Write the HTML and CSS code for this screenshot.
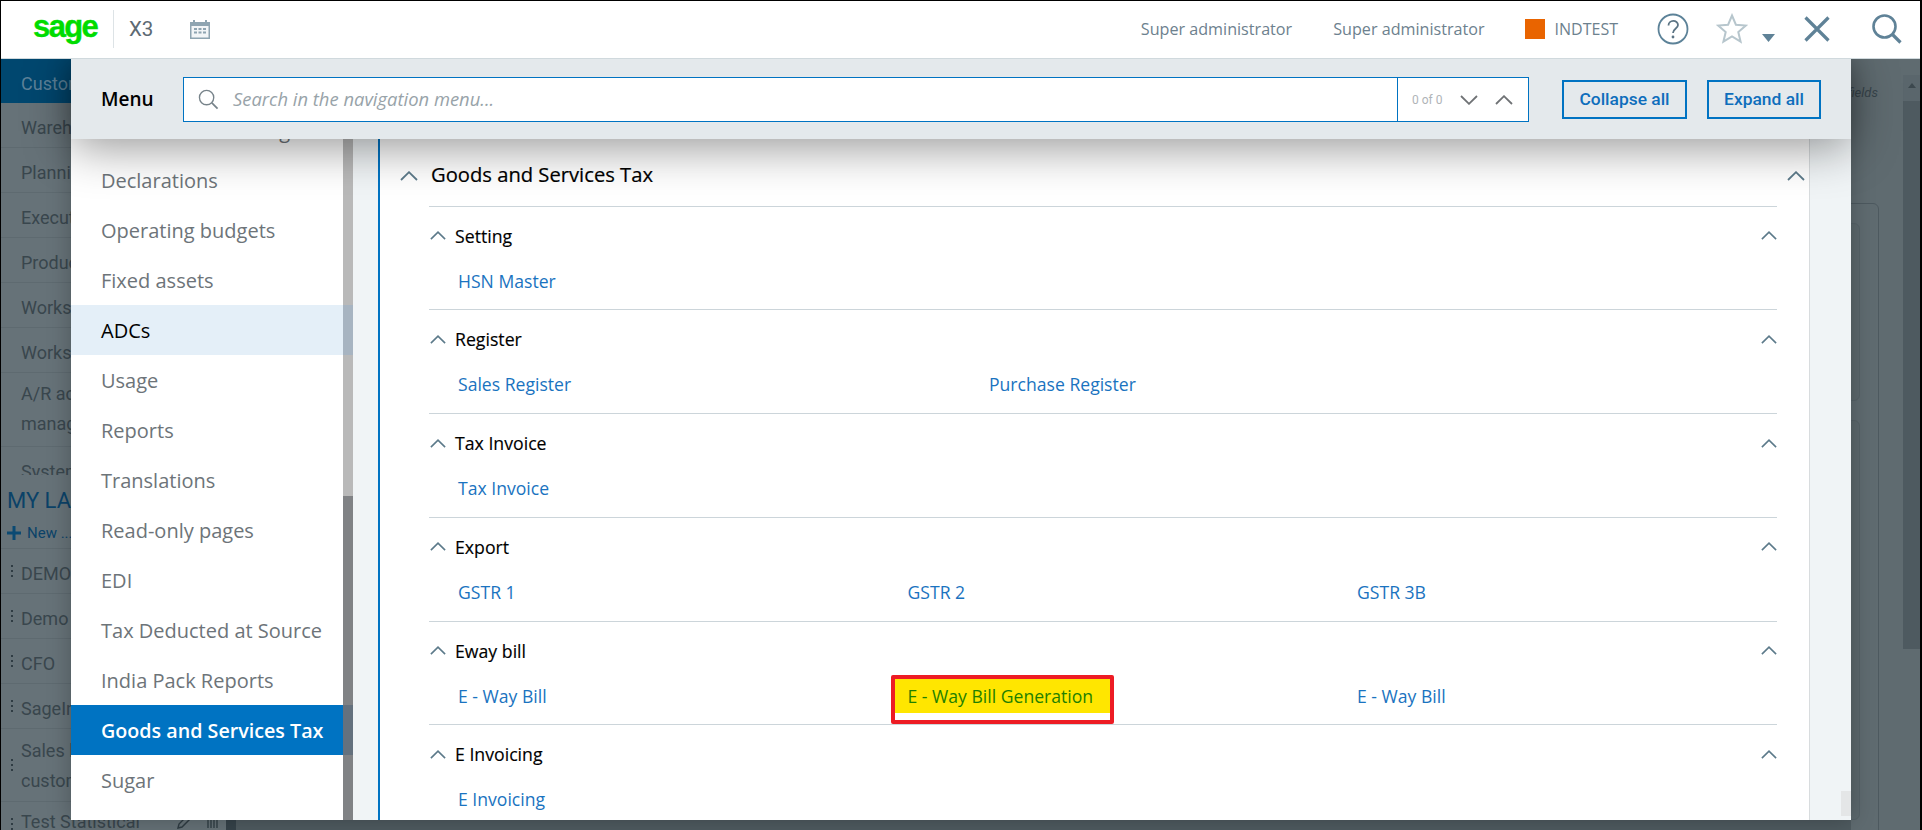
FILE: index.html
```html
<!DOCTYPE html>
<html lang="en">
<head>
<meta charset="utf-8">
<title>Sage X3 menu</title>
<link rel="stylesheet" href="styles.css">
</head>
<body>
<svg class="sprite" aria-hidden="true">
  <symbol id="chev" viewBox="0 0 18 10"><path d="M1 9 9 1.2 17 9" fill="none" stroke="currentColor" stroke-width="1.8"/></symbol>
  <symbol id="dots" viewBox="0 0 4 14"><path d="M1 1h2v2H1zM1 6h2v2H1zM1 11h2v2H1z" fill="currentColor"/></symbol>
</svg>
<div class="app">
  <header class="topbar">
    <div class="brand"><span class="sage">sage</span></div>
    <span class="product">X3</span>
    <svg class="cal" viewBox="0 0 20 20"><path d="M0 3h3V1h2v2h10V1h2v2h3v17H0z" fill="#8ea4b1"/><path d="M1.500 7h17v11.500h-17z" fill="#f2f5f7"/><path d="M4 9h3v2H4zM8.500 9h3v2h-3zM13 9h3v2h-3zM4 12.500h3v2H4zM8.500 12.500h3v2h-3zM13 12.500h3v2h-3z" fill="#8ea4b1"/></svg>
    <div class="top-right">
      <span class="user">Super administrator</span>
      <span class="user">Super administrator</span>
      <span class="folder"><i class="swatch"></i>INDTEST</span>
      <svg class="ic-help" viewBox="0 0 32 32"><circle cx="16" cy="16" r="14.500" fill="none" stroke="#5c8298" stroke-width="1.800"/><path d="M11.500 12.500c0-6 9.500-6 9.500-.5 0 3.500-5 3.500-5 8" fill="none" stroke="#5c7484" stroke-width="1.800"/><circle cx="16" cy="24" r="1.400" fill="#5c7484"/></svg>
      <svg class="ic-star" viewBox="0 0 32 32"><path d="M16 2.500l3.900 9.200 9.900.8-7.500 6.500 2.300 9.700L16 23.500l-8.600 5.200 2.300-9.700-7.500-6.500 9.900-.8z" fill="none" stroke="#b7c6cd" stroke-width="2"/></svg>
      <svg class="ic-caret" viewBox="0 0 13 8"><path d="M0 0h13L6.500 8z" fill="#5f8297"/></svg>
      <svg class="ic-close" viewBox="0 0 26 26"><path d="M1.500 1.500l23 23M24.500 1.500l-23 23" fill="none" stroke="#5f8297" stroke-width="3.200"/></svg>
      <svg class="ic-search" viewBox="0 0 30 30"><circle cx="12.500" cy="12.500" r="11" fill="none" stroke="#5f8297" stroke-width="2.600"/><path d="M20.500 20.500l8 8" fill="none" stroke="#5f8297" stroke-width="3.200"/></svg>
    </div>
  </header>

  <div class="backdrop">
    <aside class="side">
      <div class="side-scroll">
        <div class="side-row side-active">Customer relations</div>
        <div class="side-row">Warehouse</div>
        <div class="side-row">Planning</div>
        <div class="side-row">Execution</div>
        <div class="side-row">Production</div>
        <div class="side-row">Workshop</div>
        <div class="side-row">Workstation</div>
        <div class="side-row side-tall">A/R accounting<br>management</div>
        <div class="side-row">System</div>
      </div>
      <h2 class="side-title">MY LANDING PAGES</h2>
      <div class="side-new"><svg class="plus" viewBox="0 0 14 14"><path d="M5.500 0h3v5.500H14v3H8.500V14h-3V8.500H0v-3h5.500z" fill="#0b4a73"/></svg>New ...</div>
      <div class="side-row side-page"><svg class="drag"><use href="#dots"/></svg>DEMO</div>
      <div class="side-row side-page"><svg class="drag"><use href="#dots"/></svg>Demo</div>
      <div class="side-row side-page"><svg class="drag"><use href="#dots"/></svg>CFO</div>
      <div class="side-row side-page"><svg class="drag"><use href="#dots"/></svg>SageIntacct</div>
      <div class="side-row side-page side-tall2"><svg class="drag"><use href="#dots"/></svg>Sales by<br>customer</div>
      <div class="side-row side-page side-last"><svg class="drag"><use href="#dots"/></svg>Test Statistical
        <svg class="tool-pen" viewBox="0 0 14 14"><path d="M1 13l1-4 8-8 3 3-8 8z" fill="none" stroke="#2f3c43" stroke-width="1.400"/></svg>
        <svg class="tool-bars" viewBox="0 0 12 12"><path d="M1 0v12M4 0v12M7 0v12M10 0v12" stroke="#2f3c43" stroke-width="1.300"/></svg>
      </div>
    </aside>
    <div class="splitter"></div>
    <div class="work">
      <div class="work-main"></div>
      <div class="rail">
        <div class="rail-content">
          <div class="rail-head"><em>Mandatory fields</em></div>
          <div class="outer-card">
            <div class="inner-card"></div>
            <div class="inner-card inner-second"></div>
          </div>
        </div>
        <div class="rail-scroll"><i class="rail-arrow"></i><i class="rail-thumb"></i></div>
      </div>
    </div>
  </div>

  <section class="panel">
    <div class="panel-head">
      <span class="panel-title">Menu</span>
      <div class="search">
        <svg class="search-ic" viewBox="0 0 22 22"><circle cx="9" cy="9" r="7.500" fill="none" stroke="#77838a" stroke-width="1.400"/><path d="M14.500 14.500l6 6" stroke="#77838a" stroke-width="1.800"/></svg>
        <span class="search-ph">Search in the navigation menu...</span>
        <div class="search-tools">
          <span class="count">0 of 0</span>
          <svg class="search-chev down"><use href="#chev"/></svg>
          <svg class="search-chev"><use href="#chev"/></svg>
        </div>
      </div>
      <button class="btn btn-collapse">Collapse all</button>
      <button class="btn btn-expand">Expand all</button>
    </div>
    <div class="panel-body">
      <nav class="cats">
        <div class="cat-list">
          <div class="cat">Financial accounting</div>
          <div class="cat">Declarations</div>
          <div class="cat">Operating budgets</div>
          <div class="cat">Fixed assets</div>
          <div class="cat cat-hover">ADCs</div>
          <div class="cat">Usage</div>
          <div class="cat">Reports</div>
          <div class="cat">Translations</div>
          <div class="cat">Read-only pages</div>
          <div class="cat">EDI</div>
          <div class="cat">Tax Deducted at Source</div>
          <div class="cat">India Pack Reports</div>
          <div class="cat cat-active">Goods and Services Tax</div>
          <div class="cat">Sugar</div>
        </div>
      </nav>
      <div class="gutter-left"></div>
      <div class="content">
        <div class="sec-head">
          <svg class="chev-lg"><use href="#chev"/></svg>
          <h2 class="sec-title">Goods and Services Tax</h2>
          <svg class="chev-lg chev-end"><use href="#chev"/></svg>
        </div>
        <div class="sub">
          <div class="sub-head"><svg class="chev-sm"><use href="#chev"/></svg><h3 class="sub-title">Setting</h3><svg class="chev-sm chev-end"><use href="#chev"/></svg></div>
          <div class="links"><a class="link">HSN Master</a></div>
        </div>
        <div class="sub">
          <div class="sub-head"><svg class="chev-sm"><use href="#chev"/></svg><h3 class="sub-title">Register</h3><svg class="chev-sm chev-end"><use href="#chev"/></svg></div>
          <div class="links links-2"><a class="link">Sales Register</a><a class="link">Purchase Register</a></div>
        </div>
        <div class="sub">
          <div class="sub-head"><svg class="chev-sm"><use href="#chev"/></svg><h3 class="sub-title">Tax Invoice</h3><svg class="chev-sm chev-end"><use href="#chev"/></svg></div>
          <div class="links"><a class="link">Tax Invoice</a></div>
        </div>
        <div class="sub">
          <div class="sub-head"><svg class="chev-sm"><use href="#chev"/></svg><h3 class="sub-title">Export</h3><svg class="chev-sm chev-end"><use href="#chev"/></svg></div>
          <div class="links"><a class="link">GSTR 1</a><a class="link">GSTR 2</a><a class="link">GSTR 3B</a></div>
        </div>
        <div class="sub">
          <div class="sub-head"><svg class="chev-sm"><use href="#chev"/></svg><h3 class="sub-title">Eway bill</h3><svg class="chev-sm chev-end"><use href="#chev"/></svg></div>
          <div class="links"><a class="link">E - Way Bill</a><a class="link link-mark">E - Way Bill Generation<i class="redbox"></i></a><a class="link">E - Way Bill</a></div>
        </div>
        <div class="sub sub-last">
          <div class="sub-head"><svg class="chev-sm"><use href="#chev"/></svg><h3 class="sub-title">E Invoicing</h3><svg class="chev-sm chev-end"><use href="#chev"/></svg></div>
          <div class="links"><a class="link">E Invoicing</a></div>
        </div>
      </div>
      <div class="gutter-right"><i class="corner"></i></div>
    </div>
  </section>
</div>
</body>
</html>
```
FILE: styles.css
```css
* { box-sizing: border-box; }
html, body { margin: 0; padding: 0; background: #000; }
body { font-family: "Open Sans", sans-serif; }
.sprite { display: none; }
.app {
  position: relative;
  width: 1922px;
  height: 830px;
  overflow: hidden;
  display: flex;
  flex-direction: column;
  background: #000;
  padding: 1px 2px 0 1px;
}

/* top bar */
.topbar {
  position: relative;
  z-index: 3;
  height: 58px;
  flex: none;
  display: flex;
  align-items: center;
  background: #fff;
  border-bottom: 1px solid #d0d9dd;
  padding-left: 32px;
}
.brand { width: 81px; height: 38px; border-right: 1px solid #dde3e6; display: flex; align-items: center; margin-top: -1px; }
.sage { font-family: "Liberation Sans", sans-serif; font-weight: 700; font-size: 31px; letter-spacing: -1.6px; color: #00dc00; line-height: 1; margin-top: -5px; -webkit-text-stroke: .4px #00dc00; }
.product { font-family: "Roboto", sans-serif; font-size: 20.500px; color: #5d6a73; margin-left: 15px; width: 61px; margin-top: -2px; }
.cal { width: 20px; height: 20px; flex: none; margin-top: -2px; }
.top-right { margin-left: auto; display: flex; align-items: center; height: 100%; }
.user { font-family: "Open Sans", sans-serif; font-size: 16.150px; color: #6d818e; margin-right: 41px; white-space: nowrap; margin-top: -2px; }
.folder { display: flex; align-items: center; font-size: 16px; color: #6d818e; margin-top: -2px; margin-left: -1px; }
.swatch { width: 20px; height: 20px; background: #e96400; margin-right: 10px; }
.ic-help { width: 32px; height: 32px; margin-left: 39px; margin-top: -2px; }
.ic-star { width: 32px; height: 32px; margin-left: 27px; margin-top: -2px; }
.ic-caret { width: 13px; height: 8px; margin-left: 14px; margin-top: 16px; }
.ic-close { width: 26px; height: 26px; margin-left: 29px; margin-top: -2px; }
.ic-search { width: 30px; height: 30px; margin-left: 42px; margin-right: 18px; margin-top: -2px; }

/* dimmed page behind the menu */
.backdrop {
  flex: 1;
  min-height: 0;
  display: flex;
  background: #5f6c72;
  font-family: "Roboto", sans-serif;
  color: #39464d;
}
.side { width: 225px; flex: none; overflow: hidden; background: #667278; }
.side-scroll { height: 416px; overflow: hidden; }
.side-row { height: 45px; padding: 4px 0 0 20px; display: flex; align-items: center; font-size: 18px; border-bottom: 1px solid #5e6a70; white-space: nowrap; }
.side-active { height: 44px; background: #00476f; color: #5c8199; border-bottom: none; }
.side-tall { height: 74px; line-height: 30px; display: block; padding-top: 6px; }
.side-title { margin: 13px 0 0 6px; height: 29px; font-size: 22px; font-weight: 400; line-height: 26px; color: #0b4268; white-space: nowrap; }
.side-new { height: 31px; padding-left: 6px; display: flex; align-items: center; gap: 6px; font-size: 15px; color: #0b4268; border-bottom: 1px solid #5e6a70; margin-top: 1px; }
.plus { width: 14px; height: 14px; }
.side-page { position: relative; }
.drag { position: absolute; left: 9px; top: 50%; margin-top: -7px; width: 4px; height: 14px; color: #2f3c43; }
.side-tall2 { height: 73px; line-height: 30px; display: block; padding-top: 7px; }
.side-last { height: 44px; align-items: flex-start; padding-top: 9px; }
.tool-pen { width: 14px; height: 14px; margin-left: 37px; margin-top: 4px; }
.tool-bars { width: 12px; height: 12px; margin-left: 16px; margin-top: 5px; }
.splitter { width: 10px; flex: none; background: #36434a; }
.work { flex: 1; min-width: 0; display: flex; background: #4f5b60; }
.work-main { flex: 1; }
.rail { width: 69px; flex: none; display: flex; background: #5f6b70; }
.rail-content { width: 52px; overflow: hidden; }
.rail-head { height: 78px; display: flex; justify-content: flex-end; align-items: flex-start; padding: 26px 25px 0 0; font-size: 13px; white-space: nowrap; color: #39464d; }
.outer-card { width: 70px; height: 700px; margin-left: -42px; margin-top: 66px; border: 1px solid #4d595f; border-radius: 6px; padding-top: 19px; }
.inner-card { width: 50px; height: 178px; border: 1px solid #566268; border-radius: 6px; background: #5c686d; }
.inner-second { margin-top: 19px; height: 400px; }
.rail-scroll { width: 17px; flex: none; display: flex; flex-direction: column; align-items: center; margin-top: 16px; height: 574px; background: #5a666c; }
.rail-arrow { width: 0; height: 0; border: 4.500px solid transparent; border-bottom: 5px solid #3c484e; border-top: 0; margin-top: 8px; margin-bottom: 13px; }
.rail-thumb { width: 17px; flex: 1; background: #4e5a60; }

/* menu panel */
.panel {
  position: absolute;
  left: 71px;
  top: 59px;
  width: 1780px;
  height: 761px;
  display: flex;
  flex-direction: column;
  background: #fff;
  box-shadow: 0 0 22px rgba(0, 0, 0, .25);
}
.panel-head {
  position: relative;
  z-index: 2;
  height: 80px;
  flex: none;
  display: flex;
  align-items: center;
  background: #e4e9ec;
  padding-left: 30px;
  box-shadow: 0 8px 48px rgba(0, 0, 0, .42);
}
.panel-title { width: 82px; font-size: 19px; font-weight: 600; color: #000; }
.search { width: 1346px; height: 45px; margin-top: 1px; display: flex; align-items: center; background: #fff; border: 1px solid #0073c2; padding-left: 14px; }
.search-ic { width: 21px; height: 21px; flex: none; }
.search-ph { margin-left: 14px; margin-top: -2px; font-style: italic; font-size: 18.400px; color: #98a3a9; }
.search-tools { margin-left: auto; width: 131px; height: 100%; display: flex; align-items: center; border-left: 1px solid #0073c2; padding-left: 14px; color: #777; }
.count { font-family: "Roboto", sans-serif; font-size: 12px; color: #b0b4b8; width: 48px; }
.search-chev { width: 18px; height: 10px; margin-left: 17px; color: #6f7275; flex: none; }
.search-chev.down { transform: scaleY(-1); margin-left: 0; margin-right: 0; }
.btn { height: 39px; background: transparent; border: 2px solid #0073c2; color: #0e6ebc; font-family: "Roboto", sans-serif; font-size: 17.400px; font-weight: 500; padding: 0; }
.btn-collapse { width: 125px; margin-left: 33px; }
.btn-expand { width: 114px; margin-left: 20px; }

.panel-body { flex: 1; min-height: 0; display: flex; }
.cats { width: 282px; flex: none; overflow: hidden; background: linear-gradient(#808285, #808285) right / 10px 100% no-repeat; position: relative; }
.cats::before { content: ""; position: absolute; top: 0; right: 0; width: 10px; height: 357px; background: #b9b9b9; }
.cat-list { margin-top: -34px; position: relative; }
.cat { height: 50px; padding-left: 30px; margin-right: 10px; display: flex; align-items: center; font-size: 20px; color: #6d7479; background: #fff; position: relative; white-space: nowrap; }
.cat::after { content: ""; position: absolute; top: 0; bottom: 0; left: 100%; width: 10px; }
.cat-hover { background: #e4eff8; color: #000; }
.cat-hover::after { background: #a7b4c1; }
.cat-active { background: #0073c2; color: #fff; font-weight: 600; font-size: 19.700px; }
.cat-active::after { background: #64717e; }
.gutter-left { width: 25px; flex: none; background: #f0f4f6; }
.content { width: 1431px; flex: none; border-left: 2px solid #0073c2; padding: 0 32px 0 48px; background: #fff; overflow: hidden; }
.sec-head { height: 67.600px; display: flex; align-items: center; border-bottom: 1px solid #ccd5da; position: relative; margin-left: 1px; padding-top: 4px; }
.chev-lg { width: 18px; height: 10px; color: #5c7a8a; flex: none; position: absolute; left: -29px; top: 32px; }
.chev-lg.chev-end { left: auto; right: -28px; }
.sec-title { margin: 0; font-size: 20.200px; font-weight: 400; color: #000; padding-left: 2px; -webkit-text-stroke: .2px #000; }
.sub { height: 103.750px; border-bottom: 1px solid #ccd5da; margin-left: 1px; position: relative; }
.sub-last { border-bottom: none; }
.sub-head { height: 58px; display: flex; align-items: center; padding-left: 1px; }
.chev-sm { width: 16px; height: 9px; color: #5c7a8a; flex: none; }
.chev-end { margin-left: auto; }
.sub-title { margin: 0 0 0 9px; font-size: 17.700px; font-weight: 400; color: #000; -webkit-text-stroke: .15px #000; }
.links { display: grid; grid-template-columns: 449.500px 449.500px 1fr; padding-left: 29px; margin-top: -1px; }
.links-2 { grid-template-columns: 531px 1fr; }
.link { font-size: 17.600px; color: #1a73c0; line-height: 34px; justify-self: start; position: relative; white-space: nowrap; }
.link-mark { color: #1f8000; background: #ffe600; margin-left: -13px; padding: 0 17px 0 13px; }
.redbox { position: absolute; left: -4px; right: -4px; top: -4px; height: 49px; border: 4px solid #ed1c24; border-radius: 2px; }
.gutter-right { flex: 1; position: relative; background: #f0f4f6; border-left: 1px solid #d8dcde; }
.corner { position: absolute; right: 0; bottom: 4px; width: 10px; height: 25px; background: #e4e6e7; }
```
